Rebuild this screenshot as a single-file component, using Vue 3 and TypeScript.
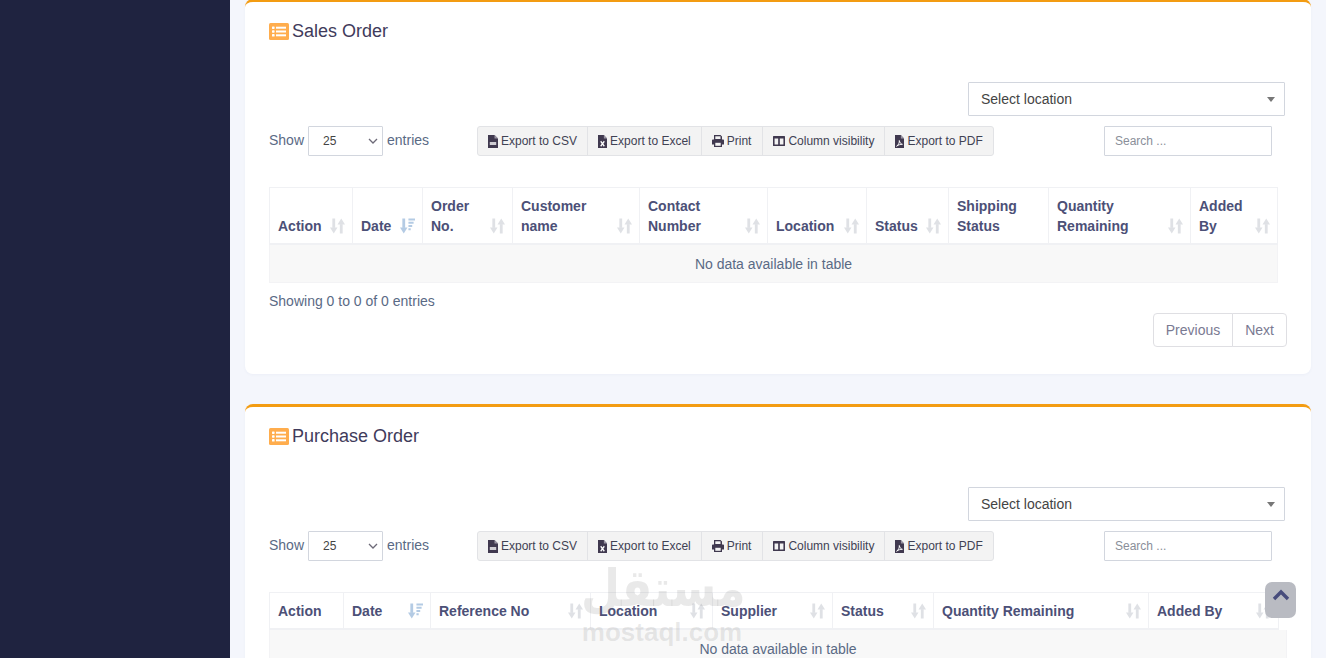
<template>
  <div class="page">
    <aside class="sidebar" />
    <main class="content">
      <section v-for="card in cards" :key="card.title" class="card">
        <h3 class="card-title">
          <svg class="title-icon" viewBox="0 0 20 17" aria-hidden="true">
            <rect width="20" height="17" rx="1.5" fill="#ffad4d" />
            <g fill="#fff">
              <rect x="3" y="3.5" width="2.6" height="2.4" rx="0.6" />
              <rect x="3" y="7.3" width="2.6" height="2.4" rx="0.6" />
              <rect x="3" y="11.1" width="2.6" height="2.4" rx="0.6" />
              <rect x="7" y="3.7" width="10" height="2" />
              <rect x="7" y="7.5" width="10" height="2" />
              <rect x="7" y="11.3" width="10" height="2" />
            </g>
          </svg>
          <span>{{ card.title }}</span>
        </h3>

        <div class="filter-row">
          <div class="location-select">
            <span>Select location</span>
            <i class="caret" />
          </div>
        </div>

        <div class="controls">
          <div class="length">
            <span class="length-label">Show</span>
            <div class="length-select">
              <span>25</span>
              <svg viewBox="0 0 10 6" width="10" height="6" aria-hidden="true">
                <path d="M1 1l4 4 4-4" fill="none" stroke="#6d6a78" stroke-width="1.300" />
              </svg>
            </div>
            <span class="length-label">entries</span>
          </div>
          <div class="buttons">
            <button v-for="btn in buttons" :key="btn.label" type="button" class="btn" :class="`btn-${btn.icon}`">
              <svg v-if="btn.icon === 'print'" class="icon-wide" viewBox="1 1 12 12" aria-hidden="true">
                <path d="M3 1h6.500L11 2.500V5.500h1.200c.5 0 .8.300.8.800v4.200h-2V13H3v-2.500H1V6.300c0-.5.300-.8.800-.8H3z" fill="#40394f" />
                <rect x="4.300" y="8.800" width="5.400" height="3" fill="#f3f3f3" />
                <rect x="4.300" y="2.300" width="5.200" height="2.700" fill="#f3f3f3" />
              </svg>
              <svg v-else-if="btn.icon === 'columns'" class="icon-wide" viewBox="0.500 1.500 13 11" aria-hidden="true">
                <path fill-rule="evenodd" d="M1.200 1.500h11.600c.4 0 .7.300.7.700v9.600c0 .4-.3.700-.7.700H1.200c-.4 0-.7-.3-.7-.7V2.200c0-.4.300-.7.700-.7zM2.200 4.200v6.700h3.900V4.200zm5.700 0v6.700h3.900V4.200z" fill="#40394f" />
              </svg>
              <svg v-else class="icon-file" :class="{ narrow: btn.icon !== 'csv' }" viewBox="0 0 10 13" preserveAspectRatio="none" aria-hidden="true">
                <path d="M0 0h6.500L10 3.500V13H0z" fill="#40394f" />
                <path d="M6.500 0v3.500H10z" fill="#9a95a3" />
                <rect v-if="btn.icon === 'csv'" x="1.800" y="7" width="6.400" height="3" fill="#cfcdd3" />
                <path v-if="btn.icon === 'excel'" d="M3 6.200l4 5M7 6.200l-4 5" stroke="#fff" stroke-width="1.400" />
                <path v-if="btn.icon === 'pdf'" d="M1.800 11.200c2-1 3.300-3.600 3-5.700.5 2.300 1.600 3.500 3.400 3.800-2-.1-4.400.5-6.400 1.900z" fill="none" stroke="#fff" stroke-width="1" />
              </svg>
              {{ btn.label }}
            </button>
          </div>
          <input class="search" type="text" placeholder="Search ..." />
        </div>

        <div class="table-wrap">
          <table class="data-table" :style="{ width: `${card.headWidth}px` }">
            <colgroup>
              <col v-for="col in card.columns" :key="col.label" :style="{ width: `${col.width}px` }" />
            </colgroup>
            <thead>
              <tr>
                <th v-for="col in card.columns" :key="col.label">
                  <div class="th-inner">
                    <span>{{ col.label }}</span>
                    <svg v-if="!col.noSort" class="sort" viewBox="0 0 16 16" aria-hidden="true">
                      <template v-if="col.label === 'Date'">
                        <path d="M4 0v10" stroke="#b4cbe4" stroke-width="3" />
                        <path d="M0 9.500h8L4 16z" fill="#b4cbe4" />
                        <path d="M9 1h7M9 4.500h5.500M9 8h4M9 11.500h2.400" stroke="#b4cbe4" stroke-width="2" />
                      </template>
                      <template v-else>
                        <path d="M4 0v10" stroke="#dfe1e5" stroke-width="3" />
                        <path d="M0 9.500h8L4 16z" fill="#dfe1e5" />
                        <path d="M12 16V6" stroke="#dfe1e5" stroke-width="3" />
                        <path d="M8 6.500h8L12 0z" fill="#dfe1e5" />
                      </template>
                    </svg>
                  </div>
                </th>
              </tr>
            </thead>
          </table>
          <div class="empty-row" :style="{ width: `${card.bodyWidth}px` }">No data available in table</div>
        </div>

        <template v-if="card.footer">
          <div class="info">Showing 0 to 0 of 0 entries</div>
          <div class="pager">
            <a class="page-link">Previous</a>
            <a class="page-link">Next</a>
          </div>
        </template>
      </section>
    </main>

    <div class="watermark" aria-hidden="true">
      <div class="wm-ar">مستقل</div>
      <div class="wm-en">mostaql.com</div>
    </div>

    <button type="button" class="to-top" aria-label="Back to top">
      <svg viewBox="0 0 18 12" width="18" height="12" aria-hidden="true">
        <path d="M2 10l7-7 7 7" fill="none" stroke="#474c7c" stroke-width="3.400" />
      </svg>
    </button>
  </div>
</template>

<script setup lang="ts">
interface Column {
  label: string;
  width: number;
  noSort?: boolean;
}

interface Card {
  title: string;
  headWidth: number;
  bodyWidth: number;
  footer: boolean;
  columns: Column[];
}

const buttons = [
  { label: "Export to CSV", icon: "csv" },
  { label: "Export to Excel", icon: "excel" },
  { label: "Print", icon: "print" },
  { label: "Column visibility", icon: "columns" },
  { label: "Export to PDF", icon: "pdf" },
];

const cards: Card[] = [
  {
    title: "Sales Order",
    headWidth: 1009,
    bodyWidth: 1009,
    footer: true,
    columns: [
      { label: "Action", width: 83 },
      { label: "Date", width: 70 },
      { label: "Order No.", width: 90 },
      { label: "Customer name", width: 127 },
      { label: "Contact Number", width: 128 },
      { label: "Location", width: 99 },
      { label: "Status", width: 82 },
      { label: "Shipping Status", width: 100, noSort: true },
      { label: "Quantity Remaining", width: 142 },
      { label: "Added By", width: 87 },
    ],
  },
  {
    title: "Purchase Order",
    headWidth: 1010,
    bodyWidth: 1018,
    footer: false,
    columns: [
      { label: "Action", width: 74, noSort: true },
      { label: "Date", width: 87 },
      { label: "Reference No", width: 160 },
      { label: "Location", width: 122 },
      { label: "Supplier", width: 120 },
      { label: "Status", width: 101 },
      { label: "Quantity Remaining", width: 215 },
      { label: "Added By", width: 130 },
    ],
  },
];
</script>

<style>
html,
body {
  margin: 0;
  overflow: hidden;
}
</style>

<style scoped>
.page {
  position: relative;
  display: flex;
  height: 658px;
  overflow: hidden;
  background: #f4f6fc;
  font-family: "Liberation Sans", Arial, sans-serif;
  font-size: 14px;
  color: #5e6278;
}

.sidebar {
  flex: 0 0 230px;
  background: #1f2340;
}

.content {
  flex: 1;
  margin-top: -1px;
  padding: 0 15px;
}

.card {
  box-sizing: border-box;
  height: 375px;
  margin-bottom: 30px;
  padding: 0 24px;
  background: #fff;
  border-top: 3px solid #f39c12;
  border-radius: 8px;
  box-shadow: 0 1px 3px rgba(60, 70, 120, 0.04);
}

.card-title {
  display: flex;
  align-items: center;
  gap: 3px;
  height: 20px;
  margin: 0;
  padding-top: 19px;
  font-size: 18px;
  font-weight: 400;
  color: #3f3b5b;
}

.title-icon {
  width: 20px;
  height: 17px;
}

.filter-row {
  display: flex;
  justify-content: flex-end;
  margin-top: 41px;
  margin-right: 2px;
}

.location-select {
  box-sizing: border-box;
  display: flex;
  align-items: center;
  justify-content: space-between;
  width: 317px;
  height: 34px;
  padding: 0 9px 0 12px;
  border: 1px solid #d2d6de;
  border-radius: 1px;
  color: #444;
}

.caret {
  width: 0;
  height: 0;
  border-left: 4px solid transparent;
  border-right: 4px solid transparent;
  border-top: 5px solid #777;
}

.controls {
  display: grid;
  grid-template-columns: 208px 627px 168px;
  align-items: center;
  height: 30px;
  margin-top: 10px;
}

.length {
  display: flex;
  align-items: center;
  gap: 4px;
  color: #5a6a85;
}

.length-label {
  margin-bottom: 2px;
}

.length-select {
  box-sizing: border-box;
  display: flex;
  align-items: center;
  justify-content: space-between;
  width: 75px;
  height: 30px;
  padding: 0 4px 0 14px;
  border: 1px solid #d2d6de;
  border-radius: 1px;
  background: #fff;
  font-size: 12px;
  color: #444;
}

.buttons {
  display: flex;
  width: fit-content;
  height: 30px;
  box-sizing: border-box;
  border: 1px solid #e2e3e6;
  border-radius: 3px;
  background: #f3f3f3;
}

.btn {
  display: flex;
  align-items: center;
  gap: 3px;
  padding: 0 10px;
  border: 0;
  border-left: 1px solid #e2e3e6;
  background: transparent;
  font: 12px "Liberation Sans", Arial, sans-serif;
  color: #3f4254;
  white-space: nowrap;
}

.btn:first-child {
  border-left: 0;
}

.btn-print {
  padding-right: 11px;
}

.icon-file {
  width: 10px;
  height: 13px;
}

.icon-file.narrow {
  width: 9px;
}

.icon-wide {
  width: 12px;
  height: 12px;
}

.search {
  box-sizing: border-box;
  width: 168px;
  height: 30px;
  padding: 0 10px;
  border: 1px solid #d2d6de;
  border-radius: 1px;
  outline: none;
  font: 12px "Liberation Sans", Arial, sans-serif;
}

.search::placeholder {
  color: #8a8f99;
}

.table-wrap {
  margin-top: 31px;
}

.data-table {
  table-layout: fixed;
  border-collapse: separate;
  border-spacing: 0;
  border-top: 1px solid #f0f1f4;
  border-right: 1px solid #f0f1f4;
}

.data-table th {
  box-sizing: border-box;
  padding: 8px 7px 7px 8px;
  border-left: 1px solid #f0f1f4;
  border-bottom: 2px solid #f0f1f4;
  font-size: 14px;
  font-weight: 700;
  line-height: 20px;
  text-align: left;
  vertical-align: bottom;
  color: #4c5077;
}

.th-inner {
  display: flex;
  align-items: flex-end;
  justify-content: space-between;
  gap: 8px;
}

.sort {
  flex: 0 0 15px;
  width: 15px;
  height: 16px;
  margin-bottom: 2px;
}

.empty-row {
  box-sizing: border-box;
  height: 38px;
  border: 1px solid #f3f3f5;
  border-top: 0;
  background: #f8f8f8;
  line-height: 38px;
  text-align: center;
  color: #5a6a85;
}

.info {
  margin-top: 8px;
  line-height: 20px;
  color: #5a6a85;
}

.pager {
  display: flex;
  justify-content: flex-end;
  margin-top: 2px;
}

.page-link {
  box-sizing: border-box;
  height: 34px;
  padding: 0 12px;
  border: 1px solid #dfdfe3;
  background: #fff;
  line-height: 32px;
  color: #7a7a92;
}

.page-link:first-child {
  border-radius: 4px 0 0 4px;
}

.page-link:last-child {
  margin-left: -1px;
  border-radius: 0 4px 4px 0;
}

.watermark {
  position: absolute;
  left: 581px;
  top: 562px;
  width: 162px;
  text-align: center;
  color: rgba(120, 120, 120, 0.16);
  pointer-events: none;
}

.wm-ar {
  font-family: "DejaVu Sans", sans-serif;
  font-size: 45px;
  font-weight: 700;
  line-height: 54px;
  white-space: nowrap;
  transform: scaleY(1.15);
}

.wm-en {
  margin-top: 1px;
  font-size: 26px;
  font-weight: 700;
  line-height: 30px;
}

.to-top {
  position: absolute;
  left: 1265px;
  top: 582px;
  display: flex;
  align-items: flex-start;
  justify-content: center;
  width: 31px;
  height: 36px;
  padding: 7px 0 0;
  border: 0;
  border-radius: 7px;
  background: #b9bbc2;
}
</style>
